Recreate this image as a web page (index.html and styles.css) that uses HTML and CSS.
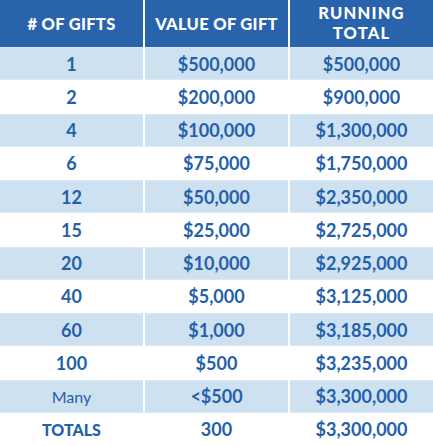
FILE: index.html
```html
<!DOCTYPE html>
<html lang="en">
<head>
  <meta charset="UTF-8">
  <title>Gift Chart</title>
  <link rel="stylesheet" href="styles.css">
</head>
<body>
  <div class="gift-table">
    <div class="cell head">&#35; OF GIFTS</div>
    <div class="cell head">VALUE OF GIFT</div>
    <div class="cell head running">RUNNING<br>TOTAL</div>

    <div class="cell shade">1</div>
    <div class="cell shade">$500,000</div>
    <div class="cell shade">$500,000</div>

    <div class="cell">2</div>
    <div class="cell">$200,000</div>
    <div class="cell">$900,000</div>

    <div class="cell shade">4</div>
    <div class="cell shade">$100,000</div>
    <div class="cell shade">$1,300,000</div>

    <div class="cell">6</div>
    <div class="cell">$75,000</div>
    <div class="cell">$1,750,000</div>

    <div class="cell shade">12</div>
    <div class="cell shade">$50,000</div>
    <div class="cell shade">$2,350,000</div>

    <div class="cell">15</div>
    <div class="cell">$25,000</div>
    <div class="cell">$2,725,000</div>

    <div class="cell shade">20</div>
    <div class="cell shade">$10,000</div>
    <div class="cell shade">$2,925,000</div>

    <div class="cell">40</div>
    <div class="cell">$5,000</div>
    <div class="cell">$3,125,000</div>

    <div class="cell shade">60</div>
    <div class="cell shade">$1,000</div>
    <div class="cell shade">$3,185,000</div>

    <div class="cell">100</div>
    <div class="cell">$500</div>
    <div class="cell">$3,235,000</div>

    <div class="cell shade many">Many</div>
    <div class="cell shade">&lt;$500</div>
    <div class="cell shade">$3,300,000</div>

    <div class="cell totals">TOTALS</div>
    <div class="cell">300</div>
    <div class="cell">$3,300,000</div>
  </div>
</body>
</html>
```

FILE: styles.css
```css
body {
  margin: 0;
  padding: 0;
  background-color: white;
  font-family: Lato, "Open Sans", sans-serif;
}

.gift-table {
  display: grid;
  grid-template-columns: 143px 143px 143px;
  grid-template-rows: 47px repeat(12, 33.25px);
  column-gap: 2px;
  width: 433px;
  height: 446px;
}

.cell {
  display: flex;
  align-items: center;
  justify-content: center;
  text-align: center;
  color: #2460a9;
  font-size: 18px;
  font-weight: 700;
}

.head {
  background-color: #2863ab;
  color: white;
  font-size: 16.5px;
  font-weight: 900;
  line-height: 20px;
  letter-spacing: 0.3px;
}

.running {
  letter-spacing: 1.2px;
  padding-bottom: 1px;
}

.shade {
  background-color: #cde1f1;
  box-shadow: inset 0 1px 0 #dbe9f5, inset 0 -1px 0 #dbe9f5;
}

.many {
  font-weight: 400;
  font-size: 16px;
}

.totals {
  font-weight: 900;
  font-size: 16px;
}
```
